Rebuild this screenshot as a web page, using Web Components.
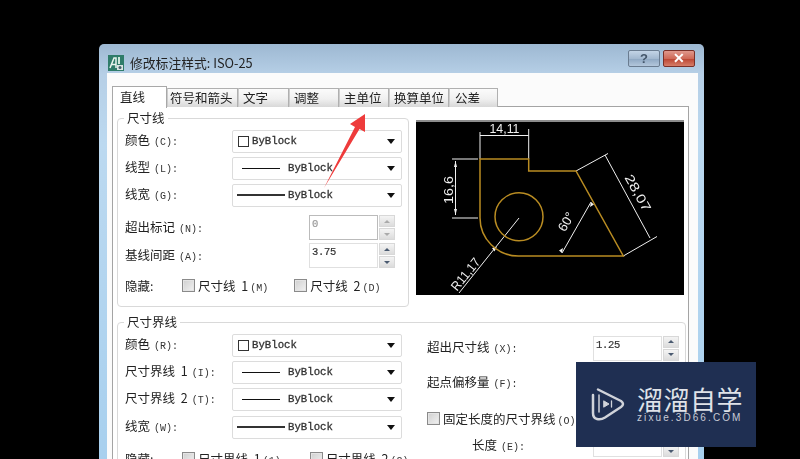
<!DOCTYPE html>
<html lang="zh">
<head>
<meta charset="utf-8">
<title>修改标注样式</title>
<style>
html, body { margin: 0; height: 100%; overflow: hidden; background: #000; }
body { font: 12px "Noto Sans CJK SC", "Liberation Sans", sans-serif; color: #222; }
</style>
</head>
<body>
<cad-dialog title="修改标注样式: ISO-25">
  <cad-tabs labels="直线,符号和箭头,文字,调整,主单位,换算单位,公差"></cad-tabs>
  <cad-page>
    <cad-group legend="尺寸线" style="width:291px;height:197px">
      <cad-row label="颜色" key="(C):"><cad-combo value="ByBlock" swatch></cad-combo></cad-row>
      <cad-row label="线型" key="(L):"><cad-combo value="ByBlock" line></cad-combo></cad-row>
      <cad-row label="线宽" key="(G):"><cad-combo value="ByBlock" line="wide"></cad-combo></cad-row>
      <cad-row label="超出标记" key="(N):" style="margin-top:5.500px"><cad-spin value="0" disabled indent></cad-spin></cad-row>
      <cad-row label="基线间距" key="(A):" style="margin-top:1px"><cad-spin value="3.75" indent></cad-spin></cad-row>
      <cad-hide style="margin-top:6px" a="尺寸线 1" akey="(M)" b="尺寸线 2" bkey="(D)" bgap="26"></cad-hide>
    </cad-group>
    <cad-preview></cad-preview>
    <cad-group legend="尺寸界线" style="grid-column:1 / 3;width:562px;height:170px">
      <div class="cols">
        <div class="col">
          <cad-row label="颜色" key="(R):"><cad-combo value="ByBlock" swatch></cad-combo></cad-row>
          <cad-row label="尺寸界线 1" key="(I):"><cad-combo value="ByBlock" line></cad-combo></cad-row>
          <cad-row label="尺寸界线 2" key="(T):"><cad-combo value="ByBlock" line></cad-combo></cad-row>
          <cad-row label="线宽" key="(W):" style="margin-top:1px"><cad-combo value="ByBlock" line="wide"></cad-combo></cad-row>
          <cad-hide style="margin-top:8px" a="尺寸界线 1" akey="(1)" b="尺寸界线 2" bkey="(2)" bgap="29"></cad-hide>
        </div>
        <div class="col right">
          <cad-row label="超出尺寸线" key="(X):" wide style="margin-top:3px"><cad-spin value="1.25"></cad-spin></cad-row>
          <cad-row label="起点偏移量" key="(F):" wide style="margin-top:7.500px"><cad-spin value="0.625"></cad-spin></cad-row>
          <cad-check label="固定长度的尺寸界线" key="(O)" style="margin-top:13px"></cad-check>
          <cad-row label="长度" key="(E):" wide indent style="margin-top:3px"><cad-spin value="1"></cad-spin></cad-row>
        </div>
      </div>
    </cad-group>
  </cad-page>
</cad-dialog>
<cad-arrow></cad-arrow>
<cad-watermark></cad-watermark>

<script>
function shadow(el, html) {
  el.attachShadow({ mode: 'open' }).innerHTML = html;
}

class CadDialog extends HTMLElement {
  connectedCallback() {
    shadow(this, `
      <style>
        :host { display: flex; flex-direction: column; position: absolute; left: 99px; top: 44px; width: 605px; height: 440px;
          box-sizing: border-box; padding: 0 6px 6px 8px; border-radius: 5px 5px 0 0; filter: blur(.35px);
          background: linear-gradient(#9db8d2 0, #b6cfe6 30px, #bcd9f0 100px, #a6cfee 100%); }
        .bar { flex: none; height: 29px; display: flex; align-items: center; gap: 6px; margin: 0 -2px 0 1px; }
        .title { font-size: 12.800px; color: #222; flex: 1; padding-top: 7px; }
        .ico { margin-top: 8px; }
        .btn { width: 32px; height: 17px; margin-top: -1px; border: 1px solid #6a7c90; border-radius: 2px; box-sizing: border-box;
          display: flex; align-items: center; justify-content: center; font: bold 13px "Liberation Sans", sans-serif; color: #44566a;
          background: linear-gradient(#c3d4e6, #a3b9d0 50%, #8ea7c2 52%, #b3c7db); }
        .close { margin-left: -3px; margin-right: 5px; color: #fff; border-color: #7a3028;
          background: linear-gradient(#e0988c, #cf6a58 50%, #bb4431 52%, #d67d68); font-size: 14px; }
        .body { flex: 1; background: #fbfbfb; padding: 13px 8px 0 5px; display: flex; flex-direction: column; }
      </style>
      <div class="bar">
        <svg class="ico" width="16" height="16" viewBox="0 0 16 16">
          <rect width="16" height="16" fill="#2f7c6a"/>
          <path d="M2 13 6 3h2v10M3.500 9.500h4" fill="none" stroke="#e8f4ee" stroke-width="1.500"/>
          <path d="M11 2v7" stroke="#cfe8dc" stroke-width="2"/>
          <rect x="9" y="10" width="6" height="5" fill="#dbe6e4"/>
          <circle cx="12" cy="12.500" r="1.500" fill="#45606a"/>
        </svg>
        <span class="title">${this.getAttribute('title')}</span>
        <span class="btn">?</span>
        <span class="btn close">✕</span>
      </div>
      <div class="body"><slot></slot></div>`);
  }
}

class CadTabs extends HTMLElement {
  connectedCallback() {
    const widths = [55, 71, 51, 50, 50, 60, 49];
    const pads = [7, 2, 4, 4, 4, 4, 5];
    const tabs = this.getAttribute('labels').split(',').map((t, i) =>
      `<span class="tab${i === 0 ? ' on' : ''}" style="width:${widths[i]}px;padding-left:${pads[i]}px">${t}</span>`).join('');
    shadow(this, `
      <style>
        :host { display: flex; flex: none; height: 21px; position: relative; z-index: 1; }
        .tab { box-sizing: border-box; height: 19px; margin-top: 2px; padding-bottom: 2px; border: 1px solid #b0b0b0; border-bottom: 0;
          border-left-color: #ccc; background: linear-gradient(#fbfbfb, #f0f0f0 55%, #d8d8d8); font-size: 12.500px; line-height: 17px; color: #222; white-space: nowrap; }
        .on { height: 22px; margin-top: 0; background: #fff; line-height: 19px; border-color: #a8a8a8; }
      </style>${tabs}`);
  }
}

class CadPage extends HTMLElement {
  connectedCallback() {
    shadow(this, `
      <style>
        :host { display: grid; grid-template-columns: 299px 268px; grid-template-rows: 204px auto; align-content: start;
          flex: 1; box-sizing: border-box; width: 577px; margin-top: -1px; padding: 3px 0 0 4px; background: #fff;
          border: 1px solid #a4a4a4; border-bottom: 0; }
      </style><slot></slot>`);
  }
}

class CadGroup extends HTMLElement {
  connectedCallback() {
    shadow(this, `
      <style>
        :host { display: block; box-sizing: border-box; }
        fieldset { box-sizing: border-box; height: 100%; margin: 0; padding: 1.500px 6px 0 7px; border: 1px solid #d9d9d9; border-radius: 4px; }
        legend { padding: 0 3px; margin-left: -1px; font-size: 12.500px; line-height: 16px; color: #222; }
        ::slotted(.cols) { display: grid; grid-template-columns: 278px 1fr; column-gap: 24px; }
      </style>
      <fieldset><legend>${this.getAttribute('legend')}</legend><slot></slot></fieldset>`);
  }
}

class CadRow extends HTMLElement {
  connectedCallback() {
    const wide = this.hasAttribute('wide');
    const indent = this.hasAttribute('indent');
    shadow(this, `
      <style>
        :host { display: grid; grid-template-columns: ${wide ? '166px' : '107px'} auto; align-items: center; min-height: 27px; }
        .l { font-size: 12.500px; word-spacing: 3px; white-space: nowrap; color: #222; margin-bottom: ${indent ? 0 : 3}px; ${indent ? 'padding-left:45px;' : ''} }
        .k { font: 10px "Liberation Mono", monospace; margin-left: 4px; color: #333; }
      </style>
      <span class="l">${this.getAttribute('label')}<span class="k">${this.getAttribute('key')}</span></span>
      <slot></slot>`);
  }
}

class CadCombo extends HTMLElement {
  connectedCallback() {
    const line = this.getAttribute('line');
    let lead = '';
    if (this.hasAttribute('swatch')) {
      lead = '<i class="sw"></i>';
    } else if (line !== null) {
      const wide = line === 'wide';
      lead = `<i class="ln" style="width:${wide ? 48 : 38}px;height:${wide ? 2 : 1}px;margin-left:${wide ? 0 : 5}px;margin-right:${wide ? 3 : 8}px;background:${wide ? '#333' : '#111'}"></i>`;
    }
    shadow(this, `
      <style>
        :host { display: flex; align-items: center; box-sizing: border-box; width: 170px; height: 23px; padding: 0 4px;
          border: 1px solid #dcdcdc; border-radius: 2px; background: #fff; }
        .sw { width: 9px; height: 9px; border: 1px solid #333; margin: 0 3px 0 1px; flex: none; }
        .ln { flex: none; }
        .v { flex: 1; font: 10.700px "Liberation Mono", monospace; -webkit-text-stroke: .3px #333; color: #333; }
        .a { width: 0; height: 0; border: 4px solid transparent; border-top: 5px solid #111; border-bottom: 0; margin-right: 2px; }
      </style>
      ${lead}<span class="v">${this.getAttribute('value')}</span><i class="a"></i>`);
  }
}

class CadSpin extends HTMLElement {
  connectedCallback() {
    const off = this.hasAttribute('disabled');
    shadow(this, `
      <style>
        :host { display: flex; align-items: stretch; gap: 1px; width: 86px; height: 25px; margin-left: ${this.hasAttribute('indent') ? 77 : 0}px; }
        .f { flex: 1; box-sizing: border-box; padding: 2px 2px; border: 1px solid ${off ? '#bbb' : '#e0e0e0'}; background: #fff;
          font: 10.500px "Liberation Mono", monospace; color: ${off ? '#999' : '#333'}; letter-spacing: -.3px; -webkit-text-stroke: .2px ${off ? '#999' : '#333'}; }
        .b { width: 16px; display: flex; flex-direction: column; gap: 1px; }
        .b i { flex: 1; display: flex; align-items: center; justify-content: center; border: 1px solid #d8d8d8;
          background: linear-gradient(#f4f4f4, #dcdcdc); }
        .b i::after { content: ""; border: 3px solid transparent; }
        .u::after { border-bottom: 3px solid ${off ? '#aaa' : '#4a5a70'} !important; border-top: 0 !important; }
        .d::after { border-top: 3px solid ${off ? '#aaa' : '#4a5a70'} !important; border-bottom: 0 !important; }
      </style>
      <span class="f">${this.getAttribute('value')}</span>
      <span class="b"><i class="u"></i><i class="d"></i></span>`);
  }
}

class CadCheck extends HTMLElement {
  connectedCallback() {
    shadow(this, `
      <style>
        :host { display: flex; align-items: center; gap: 3px; font-size: 12.500px; word-spacing: 3px; color: #222; white-space: nowrap; }
        .c { width: 11px; height: 11px; border: 1px solid #8a8a8a; background: linear-gradient(135deg, #cfcfcf, #f2f2f2); box-shadow: inset 0 0 0 1px #e4e4e4; flex: none; }
        .k { font: 10px "Liberation Mono", monospace; margin-left: 2px; color: #333; }
      </style>
      <i class="c"></i><span>${this.getAttribute('label')}<span class="k">${this.getAttribute('key') || ''}</span></span>`);
  }
}

class CadHide extends HTMLElement {
  connectedCallback() {
    const a = this.getAttribute('a'), b = this.getAttribute('b');
    shadow(this, `
      <style>
        :host { display: flex; align-items: center; height: 20px; font-size: 12.500px; color: #222; }
        .h { width: 57px; flex: none; }
        cad-check + cad-check { margin-left: ${this.getAttribute('bgap')}px; }
      </style>
      <span class="h">隐藏:</span>
      <cad-check label="${a}" key="${this.getAttribute('akey')}"></cad-check>
      <cad-check label="${b}" key="${this.getAttribute('bkey')}"></cad-check>`);
  }
}

class CadPreview extends HTMLElement {
  connectedCallback() {
    shadow(this, `
      <style>
        :host { display: block; width: 268px; height: 175px; margin-top: 10px; background: #000; border-top: 2px solid #8c8c8c; box-sizing: border-box; }
        svg { display: block; }
        text { font-family: "Liberation Sans", sans-serif; font-size: 13px; fill: #f0f0f0; }
      </style>
      <svg width="268" height="173" viewBox="416 122 268 173">
        <g fill="none" stroke="#f0f0f0" stroke-width="1">
          <path d="M480 132V159M528.700 129V159M480 135.500H528.700"/>
          <path d="M452 159H478M452 218H478M455.500 161V215"/>
          <path d="M576 171L608 153.500M623.300 256L657 236.500M605 155L650 238"/>
          <path d="M519 218L459 293"/>
          <path d="M591 202L562 253"/>
        </g>
        <g fill="#f0f0f0">
          <path d="M455.500 161l-1.500 6h3zM455.500 215l-1.500-6h3z"/>
          <path d="M492 248l5-1.500-2.500 5zM591 202l-1 5 4-2.500zM562 253l1-5-4 2.500z"/>
        </g>
        <g fill="none" stroke="#b98c22" stroke-width="1.500">
          <path d="M480 159H528.700V171H576L623.300 256H518.300A38.300 38.300 0 0 1 480 217.700Z"/>
          <circle cx="519" cy="216.700" r="24"/>
        </g>
        <text x="504.500" y="133" text-anchor="middle" textLength="30" lengthAdjust="spacingAndGlyphs">14,11</text>
        <text transform="translate(453 190) rotate(-90)" text-anchor="middle" textLength="28" lengthAdjust="spacingAndGlyphs">16,6</text>
        <text transform="translate(634 195) rotate(61)" text-anchor="middle" textLength="40" lengthAdjust="spacingAndGlyphs">28,07</text>
        <text transform="translate(570 224) rotate(-60)" text-anchor="middle" font-size="12">60°</text>
        <text transform="translate(469 277) rotate(-51)" text-anchor="middle" textLength="38" lengthAdjust="spacingAndGlyphs">R11,17</text>
      </svg>`);
  }
}

class CadArrow extends HTMLElement {
  connectedCallback() {
    shadow(this, `
      <style>:host { display: block; position: absolute; left: 315px; top: 105px; width: 60px; height: 90px; filter: blur(.3px); }</style>
      <svg width="60" height="90" viewBox="315 105 60 90">
        <path d="M365 114 365 132 359.500 129 324 188 355 127 350 124Z" fill="#ee3b3b"/>
      </svg>`);
  }
}

class CadWatermark extends HTMLElement {
  connectedCallback() {
    shadow(this, `
      <style>
        :host { display: flex; align-items: center; gap: 10px; position: absolute; left: 576px; top: 362px; width: 180px; height: 85px;
          box-sizing: border-box; padding-left: 15px; background: #1f2f52; }
        .t { display: flex; flex-direction: column; }
        .n { font: 400 26px/27px "Noto Sans CJK SC", sans-serif; letter-spacing: .5px; color: #dfe2e8; white-space: nowrap; }
        .u { font: 10px/12px "Liberation Sans", sans-serif; letter-spacing: 2.100px; color: #c8ccd6; white-space: nowrap; }
      </style>
      <svg width="36" height="36" viewBox="0 0 36 36" fill="none" stroke="#d0d3da" stroke-width="2.500" stroke-linecap="round" stroke-linejoin="round">
        <path d="M7 2.500 30 14Q34 17 30 20L14 30.500Q10 33 6 32Q2 31 2 26V8"/>
        <path d="M8 8V25" stroke-width="1.500"/>
        <path d="M13 14l5 3-5 3z" fill="#d0d3da" stroke-width="1"/>
        <path d="M20.500 14v6" stroke-width="1.300"/>
      </svg>
      <div class="t"><span class="n">溜溜自学</span><span class="u">zixue.3D66.COM</span></div>`);
  }
}

customElements.define('cad-dialog', CadDialog);
customElements.define('cad-tabs', CadTabs);
customElements.define('cad-page', CadPage);
customElements.define('cad-group', CadGroup);
customElements.define('cad-row', CadRow);
customElements.define('cad-combo', CadCombo);
customElements.define('cad-spin', CadSpin);
customElements.define('cad-check', CadCheck);
customElements.define('cad-hide', CadHide);
customElements.define('cad-preview', CadPreview);
customElements.define('cad-arrow', CadArrow);
customElements.define('cad-watermark', CadWatermark);
</script>
</body>
</html>
